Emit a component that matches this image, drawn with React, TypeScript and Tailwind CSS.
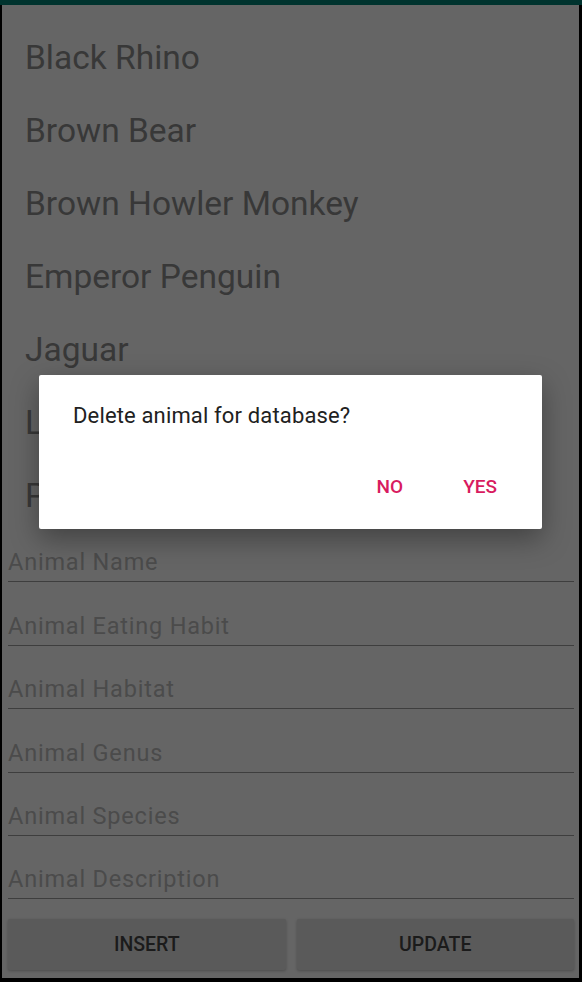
import React from "react";

const animals = [
  "Black Rhino",
  "Brown Bear",
  "Brown Howler Monkey",
  "Emperor Penguin",
  "Jaguar",
  "Lion",
  "Polar Bear",
];

const fields = [
  "Animal Name",
  "Animal Eating Habit",
  "Animal Habitat",
  "Animal Genus",
  "Animal Species",
  "Animal Description",
];

export default function App() {
  return (
    <div
      className="relative w-[582px] h-[982px] bg-black flex flex-col overflow-hidden"
      style={{ fontFamily: "Roboto, 'Noto Sans', sans-serif" }}
    >
      <div className="h-[5px] bg-[#00332e] shrink-0" />
      <div className="ml-[2px] mr-[3px] h-[973px] bg-[#656565] flex flex-col">
        <div className="h-[514px] overflow-hidden pt-[17px]">
          {animals.map((a) => (
            <div
              key={a}
              className="h-[73px] flex items-center pl-[23px] text-[33.5px] text-[#383838]"
            >
              {a}
            </div>
          ))}
        </div>
        <div className="pl-[6px] pr-[5px]">
          {fields.map((f) => (
            <div key={f} className="h-[63.4px] flex flex-col justify-end">
              <div className="text-[23.5px] tracking-[0.8px] leading-[26px] pb-[6px] text-[#4b4b4b] border-b-[1.5px] border-[#3e3e3e]">
                {f}
              </div>
            </div>
          ))}
          <div className="flex gap-[11px] pt-[20px]">
            <div className="flex-1 h-[51px] rounded-[2px] bg-[#5a5a5a] shadow-[0_1px_3px_rgba(0,0,0,0.25)] flex items-center justify-center text-[19.5px] font-medium text-[#1b1b1b]">
              INSERT
            </div>
            <div className="flex-1 h-[51px] rounded-[2px] bg-[#5a5a5a] shadow-[0_1px_3px_rgba(0,0,0,0.25)] flex items-center justify-center text-[19.5px] font-medium text-[#1b1b1b]">
              UPDATE
            </div>
          </div>
        </div>
      </div>

      <div className="absolute left-[39px] top-[375px] w-[503px] h-[154px] bg-white rounded-[2px] shadow-[0_10px_28px_rgba(0,0,0,0.35)] flex flex-col">
        <div className="pl-[34px] pt-[27px] text-[22px] tracking-[0.15px] leading-[28px] text-[#212121]">
          Delete animal for database?
        </div>
        <div className="flex justify-end gap-[60px] pr-[45px] mt-[46px] text-[19px] font-medium text-[#d81b60] leading-[22px]">
          <span>NO</span>
          <span>YES</span>
        </div>
      </div>
    </div>
  );
}
